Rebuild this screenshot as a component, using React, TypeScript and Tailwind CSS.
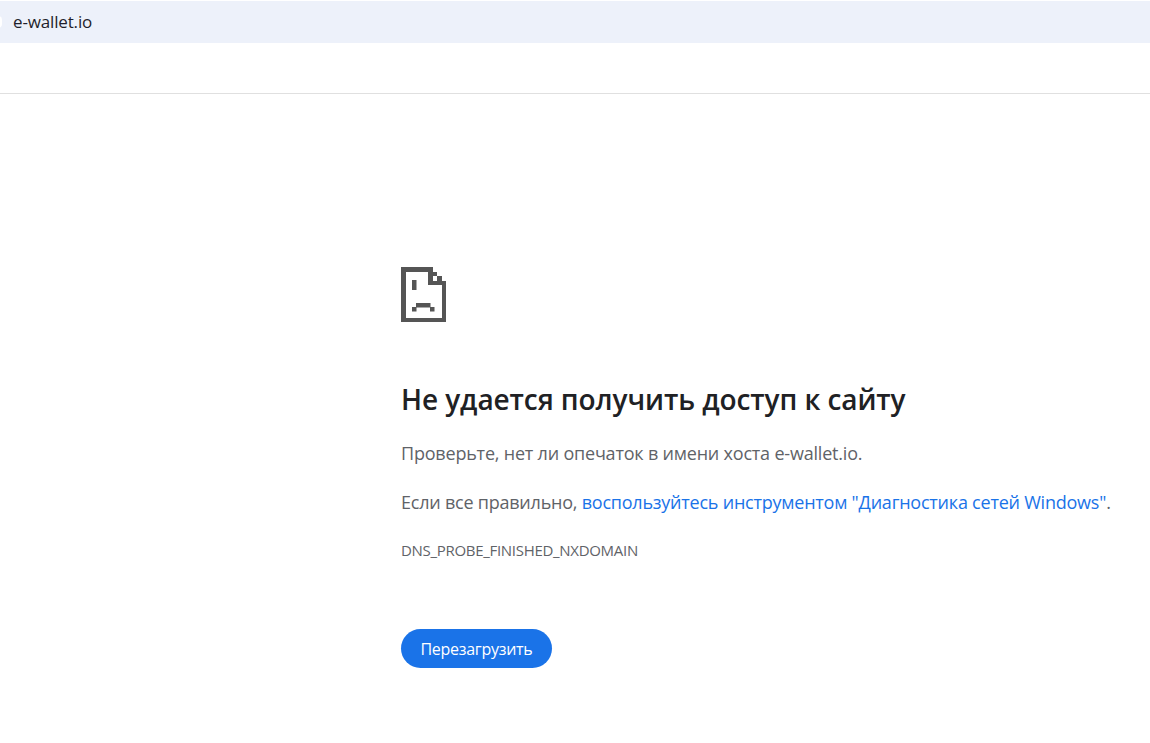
export default function App() {
  return (
    <div className="h-[743px] w-[1150px] overflow-hidden bg-white font-['Open_Sans','Noto_Sans',sans-serif]">
      <div className="mt-px flex h-[42px] items-center overflow-hidden bg-[#edf1fa]">
        <div className="ml-[-6px] h-3 w-2 shrink-0 rounded-full bg-white" />
        <span className="ml-[11px] text-[17px] tracking-[-0.15px] text-[#1f1f2b]">e-wallet.io</span>
      </div>
      <div className="h-[51px] border-b border-[#e0e0e0] bg-white" />
      <main className="pl-[401px] pt-[173px]">
        <svg width="45" height="55" viewBox="0 0 45 55" className="block" fill="#555555">
          <rect x="0" y="0" width="5" height="55" />
          <rect x="0" y="0" width="32" height="5" />
          <rect x="32" y="5" width="4" height="4" />
          <rect x="36" y="9" width="5" height="5" />
          <rect x="41" y="14" width="4" height="41" />
          <rect x="0" y="51" width="45" height="4" />
          <rect x="27" y="5" width="5" height="13" />
          <rect x="27" y="14" width="14" height="4" />
          <rect x="11" y="13" width="4.5" height="10" />
          <rect x="15" y="36" width="14.5" height="4.5" />
          <rect x="11" y="40" width="4.5" height="4.5" />
          <rect x="29" y="40" width="4.5" height="4.5" />
        </svg>
        <h1 className="mt-[57px] text-[28px] font-semibold leading-[40px] tracking-[-0.08px] text-[#202124]">Не удается получить доступ к сайту</h1>
        <p className="mt-[22px] text-[18px] leading-[24px] tracking-[-0.2px] text-[#5f6368]">Проверьте, нет ли опечаток в имени хоста e-wallet.io.</p>
        <p className="mt-[25px] whitespace-nowrap text-[18px] leading-[24px] tracking-[-0.225px] text-[#5f6368]">
          Если все правильно, <a className="text-[#1a73e8]">воспользуйтесь инструментом "Диагностика сетей Windows"</a>.
        </p>
        <p className="mt-[26px] text-[15px] leading-[20px] tracking-[-0.3px] text-[#5f6368]">DNS_PROBE_FINISHED_NXDOMAIN</p>
        <button className="mt-[69px] flex h-[39px] w-[151px] items-center justify-center rounded-full bg-[#1a73e8] text-[16px] tracking-[-0.28px] text-white">Перезагрузить</button>
      </main>
    </div>
  );
}
